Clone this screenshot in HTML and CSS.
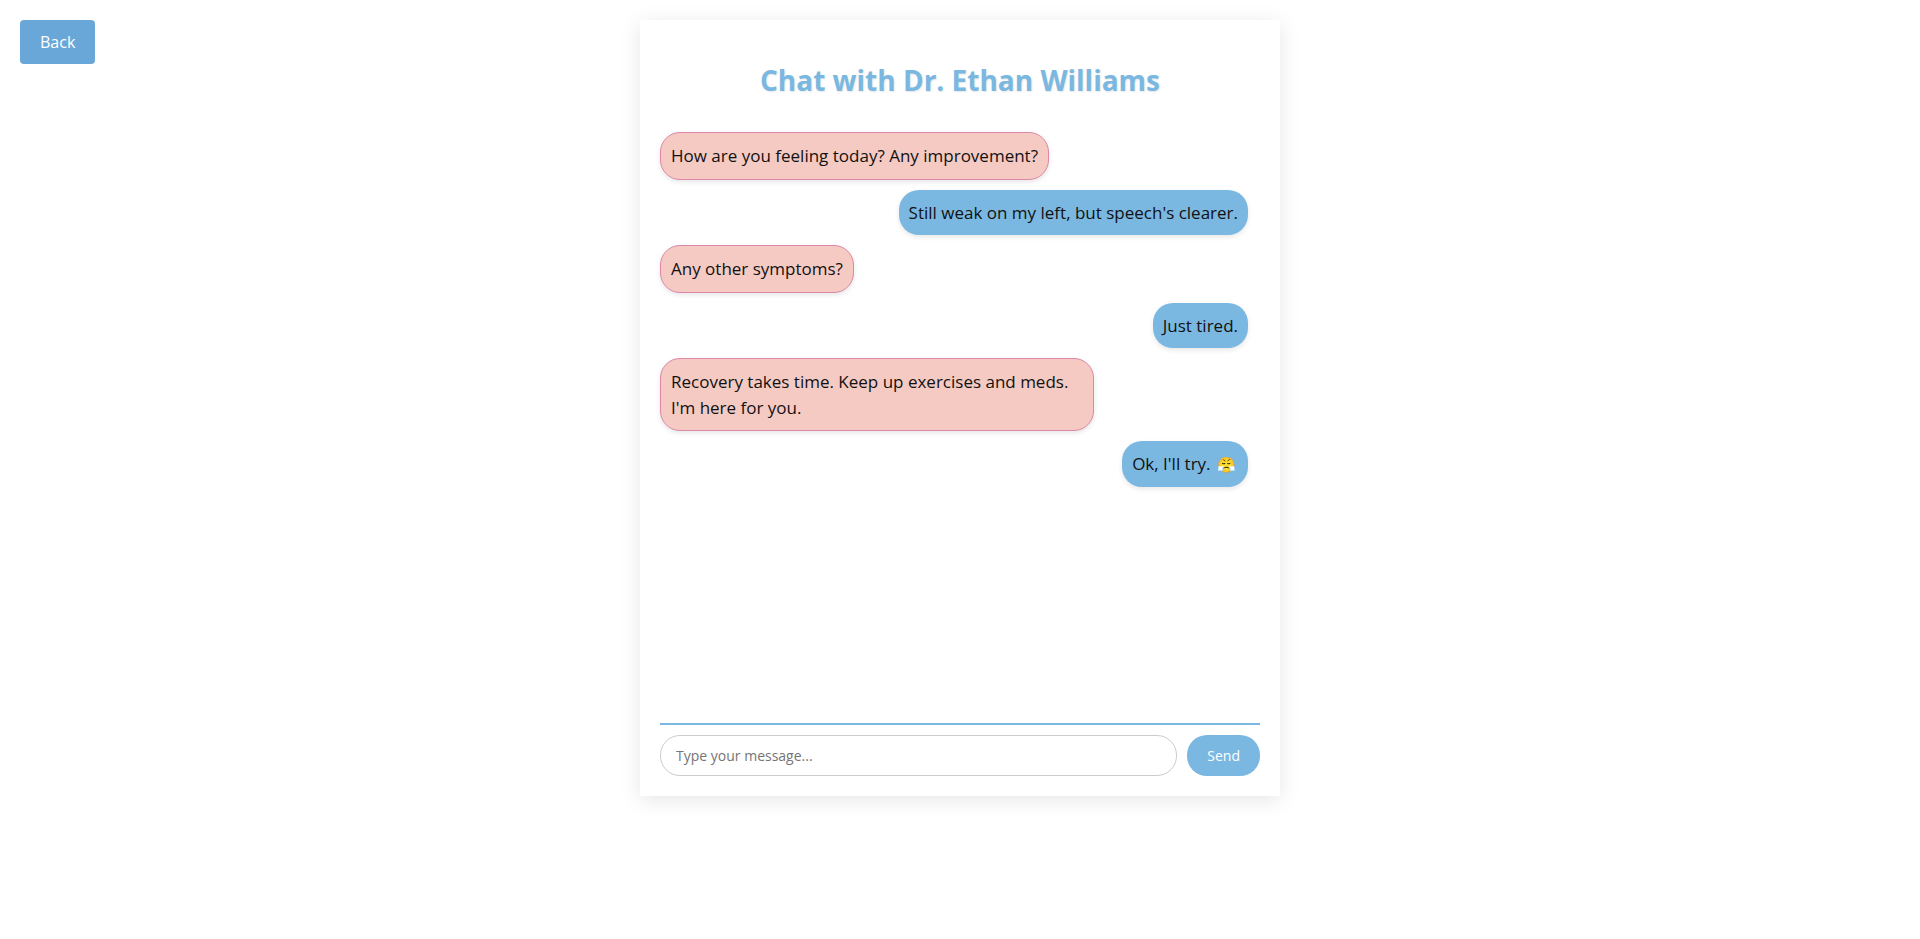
FILE: index.html
```html
<!DOCTYPE html>
<html lang="en">
<head>
<meta charset="utf-8">
<meta name="viewport" content="width=device-width, initial-scale=1">
<title>Chat with Dr. Ethan Williams</title>
<link rel="stylesheet" href="styles.css">
</head>
<body>
<button class="back" type="button">Back</button>
<main class="chat">
  <h1 class="chat-title">Chat with Dr. Ethan Williams</h1>
  <div class="messages">
    <div class="message doctor">How are you feeling today? Any improvement?</div>
    <div class="message patient">Still weak on my left, but speech's clearer.</div>
    <div class="message doctor">Any other symptoms?</div>
    <div class="message patient">Just tired.</div>
    <div class="message doctor">Recovery takes time. Keep up exercises and meds. I'm here for you.</div>
    <div class="message patient">Ok, I'll try. <span class="emoji">😤</span></div>
  </div>
  <form class="composer">
    <input class="composer-input" type="text" placeholder="Type your message..." aria-label="Message">
    <button class="send" type="button">Send</button>
  </form>
</main>
</body>
</html>
```
FILE: styles.css
```css
body {
  margin: 0;
  padding: 20px;
  background: #fff;
  color: #111;
  font-family: "Open Sans", sans-serif;
  font-size: 17px;
  line-height: 1.5;
}

.back {
  position: absolute;
  top: 20px;
  left: 20px;
  padding: 11px 20px;
  border: 0;
  border-radius: 4px;
  background: #69a7d8;
  color: #fff;
  font-family: inherit;
  font-size: 16px;
  line-height: 22px;
}

.chat {
  box-sizing: border-box;
  max-width: 640px;
  margin: 0 auto;
  padding: 20px;
  background: #fff;
  box-shadow: 0 4px 20px rgba(0, 0, 0, 0.1);
}

.chat-title {
  margin: 20px 0 32px;
  color: #7ab8e1;
  font-size: 28px;
  font-weight: 700;
  line-height: 40px;
  text-align: center;
  text-shadow: 1px 1px 2px rgba(0, 0, 0, 0.1);
}

.messages {
  display: flex;
  flex-direction: column;
  gap: 10px;
  min-height: 591px;
  padding-right: 12px;
}

.message {
  max-width: 70%;
  padding: 10px;
  border-radius: 20px;
  box-shadow: 0 2px 5px rgba(0, 0, 0, 0.1);
}

.doctor {
  align-self: flex-start;
  border: 1px solid #de87a8;
  background: #f5cac3;
}

.patient {
  align-self: flex-end;
  background: #7ab8e1;
}

.emoji {
  padding: 0 2px;
  font-size: 15px;
  line-height: 1;
}

.composer {
  display: flex;
  gap: 10px;
  padding-top: 10px;
  border-top: 2px solid #7ab8e1;
}

.composer-input {
  flex: 1;
  min-width: 0;
  padding: 10px 15px;
  border: 1px solid #ccc;
  border-radius: 20px;
  background: #fff;
  font-family: inherit;
  font-size: 14px;
}

.send {
  padding: 10px 20px;
  border: 0;
  border-radius: 20px;
  background: #7ab8e1;
  color: #fff;
  font-family: inherit;
  font-size: 14px;
}
```
